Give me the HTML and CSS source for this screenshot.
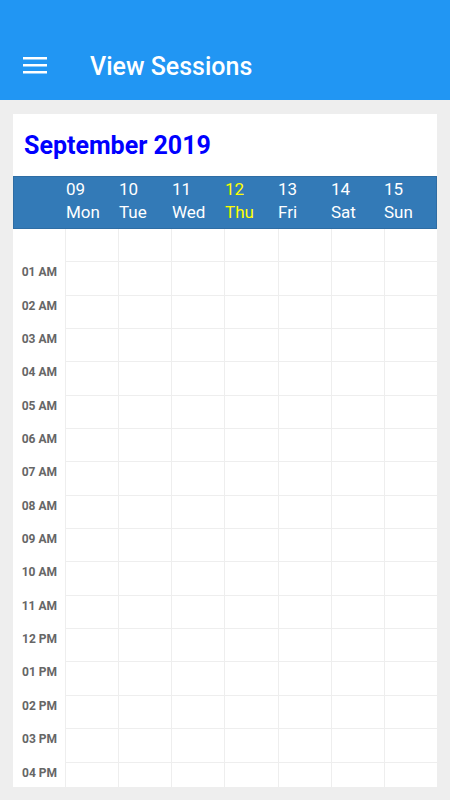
FILE: index.html
```html
<!DOCTYPE html>
<html lang="en">
<head>
    <meta charset="UTF-8">
    <meta name="viewport" content="width=device-width, initial-scale=1.0">
    <title>View Sessions</title>
    <link rel="stylesheet" href="styles.css">
</head>
<body>
    <header class="app-bar">
        <svg class="menu-icon" width="24" height="17" viewBox="0 0 24 17">
            <rect x="0" y="0" width="24" height="2.5" fill="#fff"/>
            <rect x="0" y="7" width="24" height="2.5" fill="#fff"/>
            <rect x="0" y="14" width="24" height="2.5" fill="#fff"/>
        </svg>
        <h1 class="app-title">View Sessions</h1>
    </header>

    <main class="content">
        <div class="calendar">
            <h2 class="month-title">September 2019</h2>
            <div class="week-header">
                <div></div>
                <div class="day">09<br>Mon</div>
                <div class="day">10<br>Tue</div>
                <div class="day">11<br>Wed</div>
                <div class="day today">12<br>Thu</div>
                <div class="day">13<br>Fri</div>
                <div class="day">14<br>Sat</div>
                <div class="day">15<br>Sun</div>
            </div>
            <div class="time-grid" id="timeGrid">
                <!-- linhas preenchidas pelo script -->
            </div>
        </div>
    </main>

    <script>
        // só as horas que cabem na tela (00h até 16h)
        const LAST_HOUR = 16;

        function buildGrid() {
            const grid = document.getElementById('timeGrid');

            for (let h = 0; h <= LAST_HOUR; h++) {
                const label = document.createElement('div');
                label.className = 'hour-label';
                if (h > 0) {
                    const hour = h % 12 === 0 ? 12 : h % 12;
                    label.textContent = String(hour).padStart(2, '0') + (h < 12 ? ' AM' : ' PM');
                }
                grid.appendChild(label);

                for (let d = 0; d < 7; d++) {
                    const cell = document.createElement('div');
                    cell.className = 'slot';
                    grid.appendChild(cell);
                }
            }
        }

        buildGrid();
    </script>
</body>
</html>
```

FILE: styles.css
```css
body {
    margin: 0;
    height: 800px;
    overflow: hidden;
    background-color: #eeeeee;
    font-family: Roboto, "Liberation Sans", Arial, sans-serif;
}
.app-bar {
    height: 100px;
    box-sizing: border-box;
    padding: 30px 0 0 23px;
    display: flex;
    align-items: center;
    background-color: #2196f3;
    color: white;
}
.menu-icon {
    display: block;
}
.app-title {
    margin: 4px 0 0 43px;
    font-size: 25px;
    line-height: 30px;
    font-weight: 500;
}
.content {
    padding: 14px 13px 0;
}
.calendar {
    height: 673px;
    overflow: hidden;
    background-color: white;
}
.month-title {
    margin: 0;
    height: 62px;
    padding-left: 11px;
    font-size: 25px;
    line-height: 63px;
    font-weight: bold;
    color: #0000ff;
}
.week-header {
    display: grid;
    grid-template-columns: 51px repeat(7, 1fr);
    padding: 1px 0 4px;
    border: 1px solid #2e6da4;
    background-color: #337ab7;
    color: white;
    font-size: 17px;
    line-height: 23px;
}
.day {
    padding-left: 1px;
}
.day.today {
    color: #ffff00;
}
.time-grid {
    display: grid;
    grid-template-columns: 52px repeat(7, 1fr);
    grid-auto-rows: 33.35px;
}
.hour-label {
    padding: 3px 8px 0 0;
    text-align: right;
    font-size: 12px;
    line-height: 14px;
    font-weight: bold;
    color: #666;
}
.slot {
    box-sizing: border-box;
    border-left: 1px solid #eeeeee;
    border-bottom: 1px solid #eeeeee;
}
```
